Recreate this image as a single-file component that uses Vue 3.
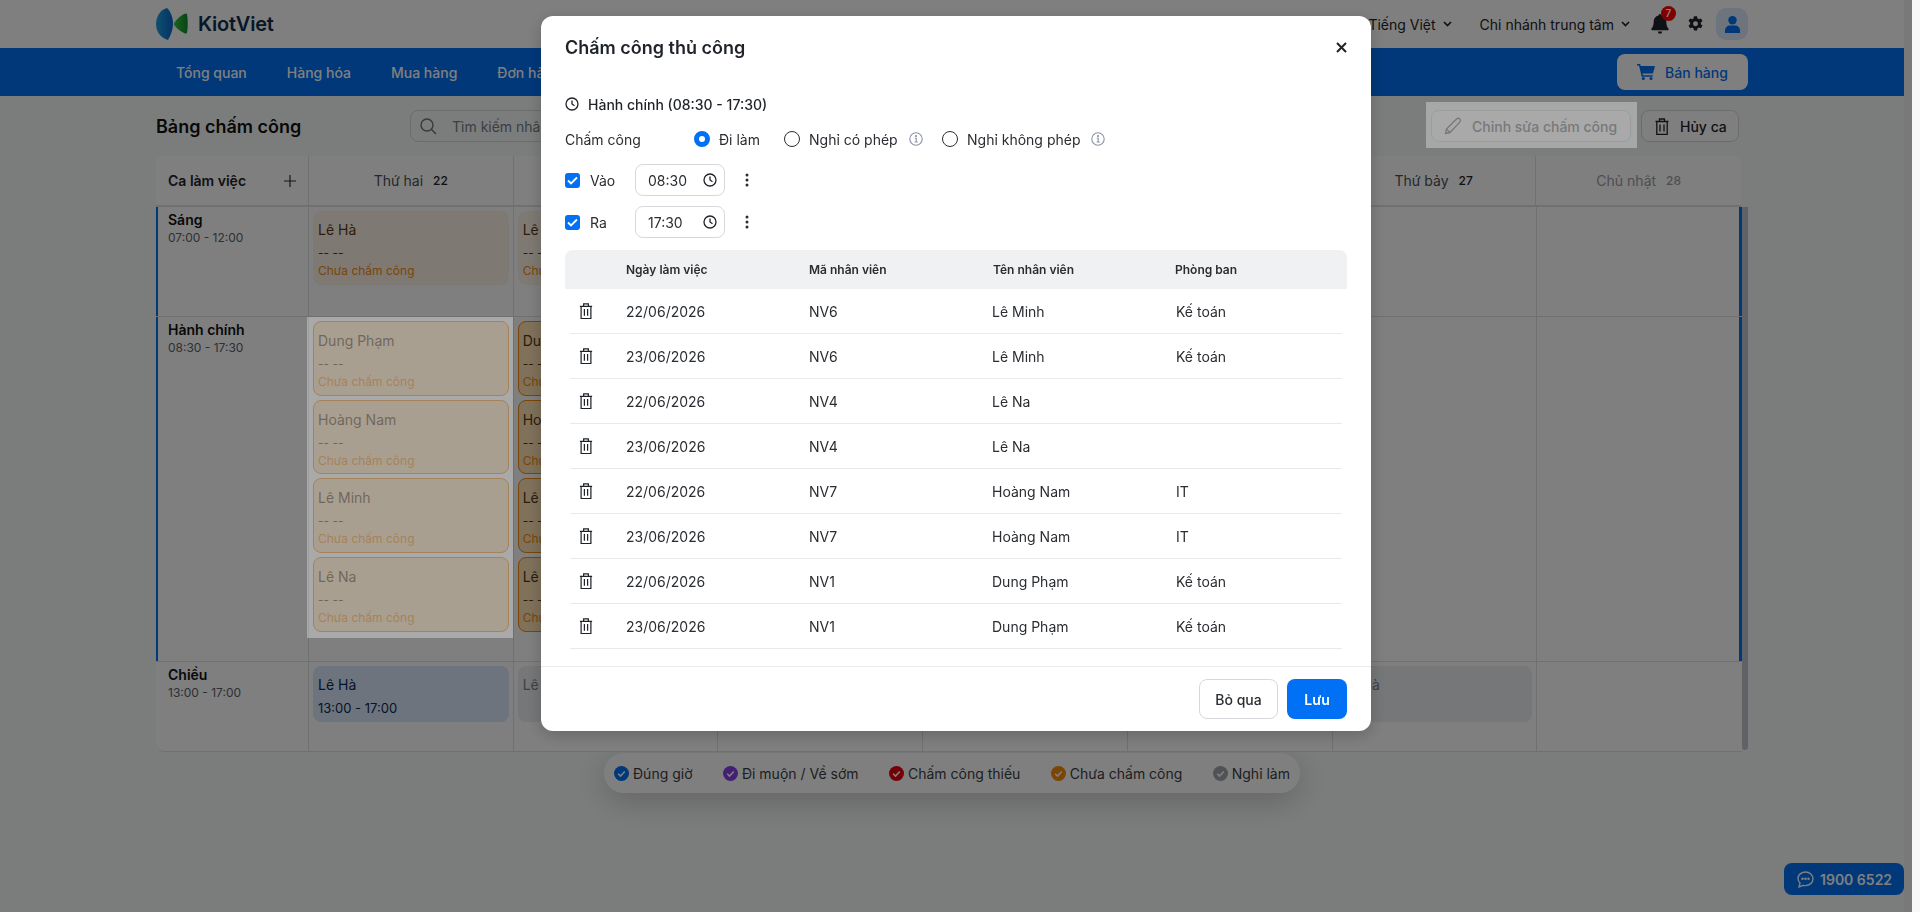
<script setup>
const navItems = ['Tổng quan', 'Hàng hóa', 'Mua hàng', 'Đơn hàng', 'Khách hàng']

const days = [
  { label: 'Thứ hai', num: 22 },
  { label: 'Thứ ba', num: 23 },
  { label: 'Thứ tư', num: 24 },
  { label: 'Thứ năm', num: 25 },
  { label: 'Thứ sáu', num: 26 },
  { label: 'Thứ bảy', num: 27 },
  { label: 'Chủ nhật', num: 28, muted: true }
]

const pending = ['Dung Phạm', 'Hoàng Nam', 'Lê Minh', 'Lê Na']

const legend = [
  { text: 'Đúng giờ', color: '#0070f4' },
  { text: 'Đi muộn / Về sớm', color: '#8b3fe8' },
  { text: 'Chấm công thiếu', color: '#e8000f' },
  { text: 'Chưa chấm công', color: '#f58a0b' },
  { text: 'Nghỉ làm', color: '#a0a4ac' }
]

const people = [
  { id: 'NV6', name: 'Lê Minh', dept: 'Kế toán' },
  { id: 'NV4', name: 'Lê Na', dept: '' },
  { id: 'NV7', name: 'Hoàng Nam', dept: 'IT' },
  { id: 'NV1', name: 'Dung Phạm', dept: 'Kế toán' }
]

// moi nhan vien co 2 ngay
const rows = people.flatMap((p) => [
  { ...p, date: '22/06/2026' },
  { ...p, date: '23/06/2026' }
])
</script>

<template>
  <div class="page">
    <div class="main">
      <header class="topbar">
        <div class="wrap topbar-in">
          <div class="logo">
            <svg width="33" height="32" viewBox="0 0 33 32">
              <defs>
                <linearGradient id="lg1" x1="0" y1="0" x2="1" y2="0">
                  <stop offset="0" stop-color="#1fa0e0" />
                  <stop offset="1" stop-color="#0a66c8" />
                </linearGradient>
                <linearGradient id="lg2" x1="0" y1="0" x2="1" y2="0">
                  <stop offset="0" stop-color="#3cc43c" />
                  <stop offset="1" stop-color="#0c8a2c" />
                </linearGradient>
              </defs>
              <path d="M11 0C4 2 0 9 0 16c0 8 5 14 12 16 3-5 5-11 5-16 0-6-2-12-6-16z" fill="url(#lg1)" />
              <path d="M31 6c-1-1-2 0-3 0-4 2-7 5-9.500 8.500-.7 1-.7 2 0 3C21 21 24 23 28 25c1 .5 2 1 3 0 1-6 1-13 0-19z" fill="url(#lg2)" />
            </svg>
            <span class="logo-text">KiotViet</span>
          </div>
          <div class="top-right">
            <span class="top-link">Tiếng Việt</span>
            <svg class="chev" width="9" height="6" viewBox="0 0 9 6"><path d="M1 1l3.500 3.500L8 1" fill="none" stroke="#1f2328" stroke-width="1.700" /></svg>
            <span class="top-link branch">Chi nhánh trung tâm</span>
            <svg class="chev" width="9" height="6" viewBox="0 0 9 6"><path d="M1 1l3.500 3.500L8 1" fill="none" stroke="#1f2328" stroke-width="1.700" /></svg>
            <span class="bell">
              <svg width="18" height="20" viewBox="0 0 18 20">
                <path d="M9 0c-1 0-1.500.8-1.500 1.600C4.500 2.300 2.700 4.700 2.700 7.600c0 4-1 5.700-2.200 7-.5.700-.2 1.700.8 1.700h15.400c1 0 1.300-1 .8-1.700-1.200-1.300-2.200-3-2.200-7 0-2.900-1.800-5.300-4.800-6C10.500.8 10 0 9 0zM6.800 17.500a2.200 2.200 0 0 0 4.400 0z" fill="#1f2328" />
              </svg>
              <em class="badge">7</em>
            </span>
            <svg class="gear" width="17" height="18" viewBox="0 0 24 24">
              <path fill="#1f2328" fill-rule="evenodd" d="M14.200 1h-4.400l-.6 3.100c-.7.300-1.300.6-1.900 1.100L4.300 4.100 2.100 7.900l2.400 2.100a8 8 0 0 0 0 2.200l-2.400 2 2.200 3.800 3-1.100c.6.500 1.200.8 1.900 1.100l.6 3h4.400l.6-3c.7-.3 1.300-.6 1.900-1.100l3 1.100 2.200-3.800-2.400-2a8 8 0 0 0 0-2.200l2.400-2.100-2.200-3.800-3 1.100c-.6-.5-1.200-.8-1.900-1.100zM12 8a3.500 3.500 0 1 1 0 7 3.500 3.500 0 0 1 0-7z" />
            </svg>
            <span class="avatar">
              <svg width="15" height="17" viewBox="0 0 15 17">
                <circle cx="7.500" cy="4.300" r="4.200" fill="#0070f4" />
                <path d="M0 17v-2.500C0 11.500 2.500 9.500 5 9.500h5c2.500 0 5 2 5 5V17z" fill="#0070f4" />
              </svg>
            </span>
          </div>
        </div>
      </header>

      <nav class="navbar">
        <div class="wrap navbar-in">
          <a v-for="item in navItems" :key="item" class="nav-item">{{ item }}</a>
          <button class="sell">
            <svg width="18" height="16" viewBox="0 0 18 16">
              <path fill="#0070f4" d="M0 0h3.200l.5 2H18l-2 7.500H5.600l.4 1.700h9.800v1.500H4.700L2 1.500H0z" />
              <circle cx="6.300" cy="14.500" r="1.500" fill="#0070f4" />
              <circle cx="14" cy="14.500" r="1.500" fill="#0070f4" />
            </svg>
            Bán hàng
          </button>
        </div>
      </nav>

      <section class="wrap content">
        <div class="title-row">
          <h1 class="page-title">Bảng chấm công</h1>
          <div class="search">
            <svg width="17" height="17" viewBox="0 0 17 17" fill="none" stroke="#6b7280" stroke-width="1.400">
              <circle cx="7" cy="7" r="6" />
              <path d="M11.500 11.500L16 16" />
            </svg>
            <span>Tìm kiếm nhân viên</span>
          </div>
          <div class="actions">
            <div class="spot">
              <button class="act-btn edit">
                <svg width="18" height="18" viewBox="0 0 18 18" fill="none" stroke="#6a6d72" stroke-width="1.300" stroke-linejoin="round">
                  <path d="M1.500 16.500l1-4.500L12.500 2c1-1 2.500-1 3.300-.1.900.9.900 2.300 0 3.200L6 15.500z" />
                  <path d="M2.500 12l3.500 3.500" />
                </svg>
                Chỉnh sửa chấm công
              </button>
            </div>
            <button class="act-btn cancel">
              <svg width="14" height="17" viewBox="0 0 14 17" fill="none" stroke="#1f2328" stroke-width="1.300">
                <path d="M.5 3.500h13M4.500 3.500V1h5v2.500M1.800 3.500v13h10.400v-13M5 6.500v7M9 6.500v7" />
              </svg>
              Hủy ca
            </button>
          </div>
        </div>

        <div class="sheet">
          <div class="sheet-head">
            <div class="head-first">
              <b>Ca làm việc</b>
              <svg width="12" height="12" viewBox="0 0 12 12"><path d="M6 0v12M0 6h12" stroke="#2a2d31" stroke-width="1.200" /></svg>
            </div>
            <div v-for="d in days" :key="d.num" class="head-day" :class="{ muted: d.muted }">
              <span>{{ d.label }}</span><i>{{ d.num }}</i>
            </div>
          </div>

          <div class="sheet-body">
            <div class="rows">
              <div class="row row-morning active">
                <div class="shift"><b>Sáng</b><span>07:00 - 12:00</span></div>
                <div class="cell"><div class="card soft"><p>Lê Hà</p><p class="dash">-- --</p><p class="st">Chưa chấm công</p></div></div>
                <div class="cell"><div class="card soft"><p>Lê Hà</p><p class="dash">-- --</p><p class="st">Chưa chấm công</p></div></div>
                <div class="cell" v-for="n in 5" :key="n"></div>
              </div>

              <div class="row row-office active">
                <div class="shift"><b>Hành chính</b><span>08:30 - 17:30</span></div>
                <div class="cell">
                  <div class="stack spot-cell">
                    <div v-for="p in pending" :key="p" class="card pending"><p>{{ p }}</p><p class="dash">-- --</p><p class="st">Chưa chấm công</p></div>
                  </div>
                </div>
                <div class="cell">
                  <div class="stack">
                    <div v-for="p in pending" :key="p" class="card pending"><p>{{ p }}</p><p class="dash">-- --</p><p class="st">Chưa chấm công</p></div>
                  </div>
                </div>
                <div class="cell" v-for="n in 5" :key="n"></div>
              </div>

              <div class="row row-noon">
                <div class="shift"><b>Chiều</b><span>13:00 - 17:00</span></div>
                <div class="cell"><div class="card blue"><p>Lê Hà</p><p class="time">13:00 - 17:00</p></div></div>
                <div class="cell"><div class="card off"><p>Lê Hà</p></div></div>
                <div class="cell"></div>
                <div class="cell"></div>
                <div class="cell"></div>
                <div class="cell"><div class="card off"><p>Lê Hà</p></div></div>
                <div class="cell"></div>
              </div>
            </div>
            <div class="thumb"></div>
          </div>
        </div>

        <div class="legend">
          <div v-for="l in legend" :key="l.text" class="legend-item">
            <svg width="15" height="15" viewBox="0 0 15 15">
              <circle cx="7.500" cy="7.500" r="7.500" :fill="l.color" />
              <path d="M4.200 7.700l2.300 2.300 4.300-4.500" fill="none" stroke="#fff" stroke-width="1.600" />
            </svg>
            {{ l.text }}
          </div>
        </div>
      </section>
    </div>
    <div class="gutter"></div>
    <div class="track"></div>

    <a class="hotline">
      <svg width="17" height="17" viewBox="0 0 17 17" fill="none" stroke="#fff" stroke-width="1.400">
        <path d="M8.500 1C4.300 1 1 3.800 1 7.500c0 1.800.8 3.300 2 4.500L2 16l4.300-1.700c.7.200 1.400.3 2.200.3 4.200 0 7.500-3 7.500-6.800S12.700 1 8.500 1z" />
        <circle cx="5.500" cy="7.800" r=".6" fill="#fff" />
        <circle cx="8.500" cy="7.800" r=".6" fill="#fff" />
        <circle cx="11.500" cy="7.800" r=".6" fill="#fff" />
      </svg>
      1900 6522
    </a>

    <div class="overlay">
      <div class="modal">
        <div class="modal-head">
          <h2>Chấm công thủ công</h2>
          <svg width="11" height="11" viewBox="0 0 11 11"><path d="M1 1l9 9M10 1l-9 9" stroke="#1f2328" stroke-width="2" /></svg>
        </div>

        <div class="modal-body">
          <div class="shift-line">
            <svg width="14" height="14" viewBox="0 0 14 14" fill="none" stroke="#1f2328" stroke-width="1.300">
              <circle cx="7" cy="7" r="6" />
              <path d="M7 3.500V7l2.500 1.700" />
            </svg>
            Hành chính (08:30 - 17:30)
          </div>

          <div class="att-row">
            <span class="att-label">Chấm công</span>
            <label class="radio on r1"><i></i>Đi làm</label>
            <label class="radio r2"><i></i>Nghỉ có phép
              <svg class="info" width="14" height="14" viewBox="0 0 14 14" fill="none" stroke="#8c95a6" stroke-width="1.100">
                <circle cx="7" cy="7" r="6.200" />
                <path d="M5.800 6.300H7.200V10M5.600 10h3.200" />
                <circle cx="7" cy="4.100" r=".5" fill="#8c95a6" />
              </svg>
            </label>
            <label class="radio r3"><i></i>Nghỉ không phép
              <svg class="info" width="14" height="14" viewBox="0 0 14 14" fill="none" stroke="#8c95a6" stroke-width="1.100">
                <circle cx="7" cy="7" r="6.200" />
                <path d="M5.800 6.300H7.200V10M5.600 10h3.200" />
                <circle cx="7" cy="4.100" r=".5" fill="#8c95a6" />
              </svg>
            </label>
          </div>

          <div class="time-row first">
            <span class="check">
              <svg width="11" height="9" viewBox="0 0 11 9"><path d="M1 4.500l3 3 6-6" fill="none" stroke="#fff" stroke-width="1.800" /></svg>
            </span>
            <span class="time-label">Vào</span>
            <div class="time-input">
              08:30
              <svg width="14" height="14" viewBox="0 0 14 14" fill="none" stroke="#1f2328" stroke-width="1.300">
                <circle cx="7" cy="7" r="6" />
                <path d="M7 3.500V7l2.500 1.700" />
              </svg>
            </div>
            <svg class="kebab" width="4" height="14" viewBox="0 0 4 14" fill="#2a2d31">
              <circle cx="2" cy="2" r="1.500" /><circle cx="2" cy="7" r="1.500" /><circle cx="2" cy="12" r="1.500" />
            </svg>
          </div>
          <div class="time-row">
            <span class="check">
              <svg width="11" height="9" viewBox="0 0 11 9"><path d="M1 4.500l3 3 6-6" fill="none" stroke="#fff" stroke-width="1.800" /></svg>
            </span>
            <span class="time-label">Ra</span>
            <div class="time-input">
              17:30
              <svg width="14" height="14" viewBox="0 0 14 14" fill="none" stroke="#1f2328" stroke-width="1.300">
                <circle cx="7" cy="7" r="6" />
                <path d="M7 3.500V7l2.500 1.700" />
              </svg>
            </div>
            <svg class="kebab" width="4" height="14" viewBox="0 0 4 14" fill="#2a2d31">
              <circle cx="2" cy="2" r="1.500" /><circle cx="2" cy="7" r="1.500" /><circle cx="2" cy="12" r="1.500" />
            </svg>
          </div>

          <div class="tbl">
            <div class="tbl-head">
              <span></span>
              <span>Ngày làm việc</span>
              <span>Mã nhân viên</span>
              <span>Tên nhân viên</span>
              <span>Phòng ban</span>
            </div>
            <div v-for="r in rows" :key="r.id + r.date" class="tbl-row">
              <svg width="14" height="16" viewBox="0 0 14 17" fill="none" stroke="#1f2328" stroke-width="1.300">
                <path d="M.5 3.500h13M4.500 3.500V1h5v2.500M1.800 3.500v13h10.400v-13M5.300 6.500v7M8.700 6.500v7" />
              </svg>
              <span>{{ r.date }}</span>
              <span>{{ r.id }}</span>
              <span>{{ r.name }}</span>
              <span>{{ r.dept }}</span>
            </div>
          </div>
        </div>

        <div class="modal-foot">
          <button class="btn-ghost">Bỏ qua</button>
          <button class="btn-save">Lưu</button>
        </div>
      </div>
    </div>
  </div>
</template>

<style scoped>
.page {
  display: flex;
  height: 912px;
  overflow: hidden;
  font-family: Inter, "Noto Sans", sans-serif;
  font-size: 14px;
  color: #1f2328;
  background: #f7fbf9;
}
.main { width: 1904px; flex: none; }
.gutter { width: 8px; flex: none; background: #f2f2f2; }
.track { width: 8px; flex: none; background: #f8f8f8; position: relative; z-index: 20; }
.wrap { width: 1592px; margin: 0 auto; }

.topbar { height: 48px; background: #fff; }
.topbar-in { display: flex; align-items: center; height: 48px; justify-content: space-between; }
.logo { display: flex; align-items: center; gap: 9px; }
.logo-text { font-size: 20px; font-weight: 600; color: #0d2f52; letter-spacing: -.2px; }
.top-right { display: flex; align-items: center; }
.top-link { font-size: 14px; }
.chev { margin-left: 7px; }
.branch { margin-left: 28px; }
.bell { position: relative; display: flex; margin-left: 21px; }
.badge {
  position: absolute;
  top: -8px;
  right: -7px;
  width: 15px;
  height: 15px;
  border-radius: 50%;
  background: #f00;
  color: #fff;
  font-style: normal;
  font-size: 10px;
  font-weight: 600;
  line-height: 15px;
  text-align: center;
}
.gear { margin-left: 18px; }
.avatar {
  margin-left: 12px;
  width: 32px;
  height: 32px;
  border-radius: 10px;
  background: #dbe9fb;
  display: flex;
  align-items: center;
  justify-content: center;
}

.navbar { height: 48px; background: #0070f4; }
.navbar-in { display: flex; align-items: center; height: 48px; padding-left: 20px; box-sizing: border-box; gap: 40px; }
.nav-item { color: #fff; font-weight: 500; font-size: 14px; }
.sell {
  margin-left: auto;
  width: 131px;
  height: 36px;
  display: flex;
  align-items: center;
  justify-content: center;
  gap: 10px;
  border: 0;
  border-radius: 8px;
  background: #fff;
  color: #0070f4;
  font: 500 14px Inter, sans-serif;
}

.title-row { display: flex; align-items: center; height: 60px; }
.page-title { margin: 0; width: 254px; font-size: 18px; font-weight: 600; color: #111; }
.search {
  width: 380px;
  height: 32px;
  box-sizing: border-box;
  border: 1px solid #d5d8dd;
  border-radius: 8px;
  display: flex;
  align-items: center;
  gap: 15px;
  padding-left: 9px;
  color: #777c84;
}
.actions { margin-left: auto; margin-right: 9px; display: flex; gap: 10px; }
.spot { position: relative; }
.spot::after {
  content: "";
  position: absolute;
  inset: -8px -6px -6px -5px;
  background: rgba(255, 255, 255, .33);
  z-index: 11;
}
.act-btn {
  height: 32px;
  display: flex;
  align-items: center;
  border: 1px solid #d5d8dd;
  border-radius: 8px;
  background: #fff;
  font: 500 14px Inter, sans-serif;
}
.edit { width: 200px; padding: 0 0 0 12px; gap: 10px; color: #6a6d72; }
.cancel { width: 98px; padding: 0 0 0 13px; gap: 11px; color: #1f2328; }

.sheet { width: 1592px; }
.sheet-head {
  width: 1585px;
  height: 51px;
  display: grid;
  grid-template-columns: 153px repeat(7, 1fr);
  background: #fff;
  border-radius: 8px 8px 0 0;
  border-bottom: 2px solid #dfe1e3;
  box-sizing: border-box;
}
.head-first {
  display: flex;
  align-items: center;
  justify-content: space-between;
  padding: 0 12px;
  border-right: 1px solid #dfe1e3;
  font-size: 14px;
}
.head-first b { font-weight: 600; }
.head-day {
  display: flex;
  align-items: center;
  justify-content: center;
  gap: 10px;
  border-right: 1px solid #dfe1e3;
  color: #4b4f55;
}
.head-day:last-child { border-right: 0; }
.head-day i { font-style: normal; font-size: 12px; font-weight: 500; color: #1f2328; }
.head-day.muted, .head-day.muted i { color: #9a9da2; }

.sheet-body { display: flex; }
.rows { width: 1586px; }
.row {
  display: grid;
  grid-template-columns: 153px repeat(7, 1fr);
  border-bottom: 1px solid #dfe1e3;
  box-sizing: border-box;
  background: #fff;
}
.row.active { box-shadow: inset 2px 0 #0070f4, inset -3px 0 #0070f4; }
.row-morning { height: 110px; }
.row-office { height: 345px; }
.row-noon { height: 90px; border-radius: 0 0 0 8px; }
.thumb { width: 6px; height: 543px; background: #c3c5ca; border-radius: 0 0 4px 4px; }
.shift { padding: 3px 12px; border-right: 1px solid #dfe1e3; }
.shift b { display: block; font-weight: 600; font-size: 14px; line-height: 20px; color: #111; }
.shift span { display: block; font-size: 12px; line-height: 16px; color: #5c6066; }
.cell { border-right: 1px solid #dfe1e3; padding: 4px 4px 0 4px; min-width: 0; }
.cell:last-child { border-right: 0; }

.stack { position: relative; display: flex; flex-direction: column; gap: 4px; margin: -4px -4px 0; padding: 4px 4px 6px; }
.spot-cell::after {
  content: "";
  position: absolute;
  inset: 0 0 0 -2px;
  background: rgba(255, 255, 255, .33);
  z-index: 11;
}
.card { box-sizing: border-box; border-radius: 8px; padding: 0 5px; height: 74px; }
.card p { margin: 0; font-size: 14px; line-height: 18px; white-space: nowrap; }
.card .dash { font-size: 12px; line-height: 16px; margin-top: 6px; }
.card .st { font-size: 12px; line-height: 16px; margin-top: 2px; color: #f58a0b; }
.card.soft { background: #fff3e6; padding-top: 10px; color: #5a3a14; }
.card.pending { height: 74.670px; background: #ffe2b4; border: 1px solid #f58a0b; padding: 10px 4px 0; color: #54391a; }
.card.blue { height: 56px; background: #dbe9fb; padding-top: 10px; color: #0b2a52; }
.card.blue .time { font-size: 13px; line-height: 18px; margin-top: 5px; }
.card.off { height: 56px; background: #eceff1; padding-top: 10px; color: #7e8186; }

.legend {
  width: 696px;
  height: 40px;
  box-sizing: border-box;
  margin: 1px auto 0;
  padding: 0 10px;
  display: flex;
  align-items: center;
  justify-content: space-between;
  background: #fff;
  border-radius: 20px;
  box-shadow: 0 8px 32px rgba(0, 0, 0, .2);
  color: #3b3e43;
}
.legend-item { display: flex; align-items: center; gap: 4px; }

.hotline {
  position: absolute;
  left: 1784px;
  top: 863px;
  width: 120px;
  height: 32px;
  box-sizing: border-box;
  padding-left: 13px;
  display: flex;
  align-items: center;
  gap: 6px;
  background: #0070f4;
  border-radius: 8px;
  color: #fff;
  font-weight: 600;
  font-size: 14px;
}

.overlay {
  position: fixed;
  inset: 0 8px 0 0;
  z-index: 10;
  background: rgba(0, 0, 0, .5);
  display: flex;
  justify-content: center;
  align-items: flex-start;
  padding-top: 16px;
  box-sizing: border-box;
}
.modal {
  width: 830px;
  height: 715px;
  background: #fff;
  border-radius: 12px;
  display: flex;
  flex-direction: column;
  box-shadow: 0 4px 16px rgba(0, 0, 0, .2);
}
.modal-head {
  height: 62px;
  flex: none;
  padding: 0 24px;
  display: flex;
  align-items: center;
  justify-content: space-between;
}
.modal-head h2 { margin: 0; font-size: 18px; font-weight: 600; color: #1f2328; }
.modal-body { flex: 1; padding: 16px 24px 0; }
.shift-line { display: flex; align-items: center; gap: 9px; height: 20px; font-weight: 500; font-size: 14px; }
.att-row { display: flex; align-items: center; height: 20px; margin-top: 15px; color: #2a2d31; }
.att-label { width: 129px; }
.radio { display: flex; align-items: center; gap: 9px; }
.radio i {
  width: 16px;
  height: 16px;
  box-sizing: border-box;
  border-radius: 50%;
  border: 1.500px solid #2a2d31;
}
.radio.on i { border: 5px solid #0070f4; background: #fff; }
.r1 { width: 90px; }
.r2 { width: 158px; }
.info { margin-left: 2px; }
.time-row { display: flex; align-items: center; height: 32px; margin-top: 10px; }
.time-row.first { margin-top: 15px; }
.check {
  width: 15px;
  height: 15px;
  border-radius: 3px;
  background: #0070f4;
  display: flex;
  align-items: center;
  justify-content: center;
  flex: none;
}
.time-label { width: 45px; margin-left: 10px; color: #2a2d31; }
.time-input {
  width: 90px;
  height: 32px;
  box-sizing: border-box;
  border: 1px solid #d5d8dd;
  border-radius: 8px;
  padding: 0 7px 0 12px;
  display: flex;
  align-items: center;
  justify-content: space-between;
  color: #2a2d31;
}
.kebab { margin-left: 20px; }
.tbl { margin-top: 12px; }
.tbl-head {
  height: 39px;
  display: grid;
  grid-template-columns: 61px 183px 184px 182px 1fr;
  align-items: center;
  background: #f0f1f3;
  border-radius: 8px 8px 0 0;
  font-size: 12px;
  font-weight: 600;
  color: #2a2d31;
}
.tbl-row {
  height: 45px;
  margin: 0 5px;
  display: grid;
  grid-template-columns: 56px 183px 183px 184px 1fr;
  align-items: center;
  border-bottom: 1px solid #e8e9eb;
  box-sizing: border-box;
  color: #2a2d31;
}
.tbl-row svg { margin-left: 9px; }
.modal-foot {
  flex: none;
  height: 65px;
  box-sizing: border-box;
  border-top: 1px solid #e8e9eb;
  padding: 12px 24px 0;
  display: flex;
  justify-content: flex-end;
  gap: 9px;
}
.btn-ghost, .btn-save {
  height: 40px;
  border-radius: 8px;
  font: 500 14px Inter, sans-serif;
}
.btn-ghost { width: 79px; border: 1px solid #d5d8dd; background: #fff; color: #2a2d31; }
.btn-save { width: 60px; border: 0; background: #0070f4; color: #fff; font-weight: 600; }
</style>
